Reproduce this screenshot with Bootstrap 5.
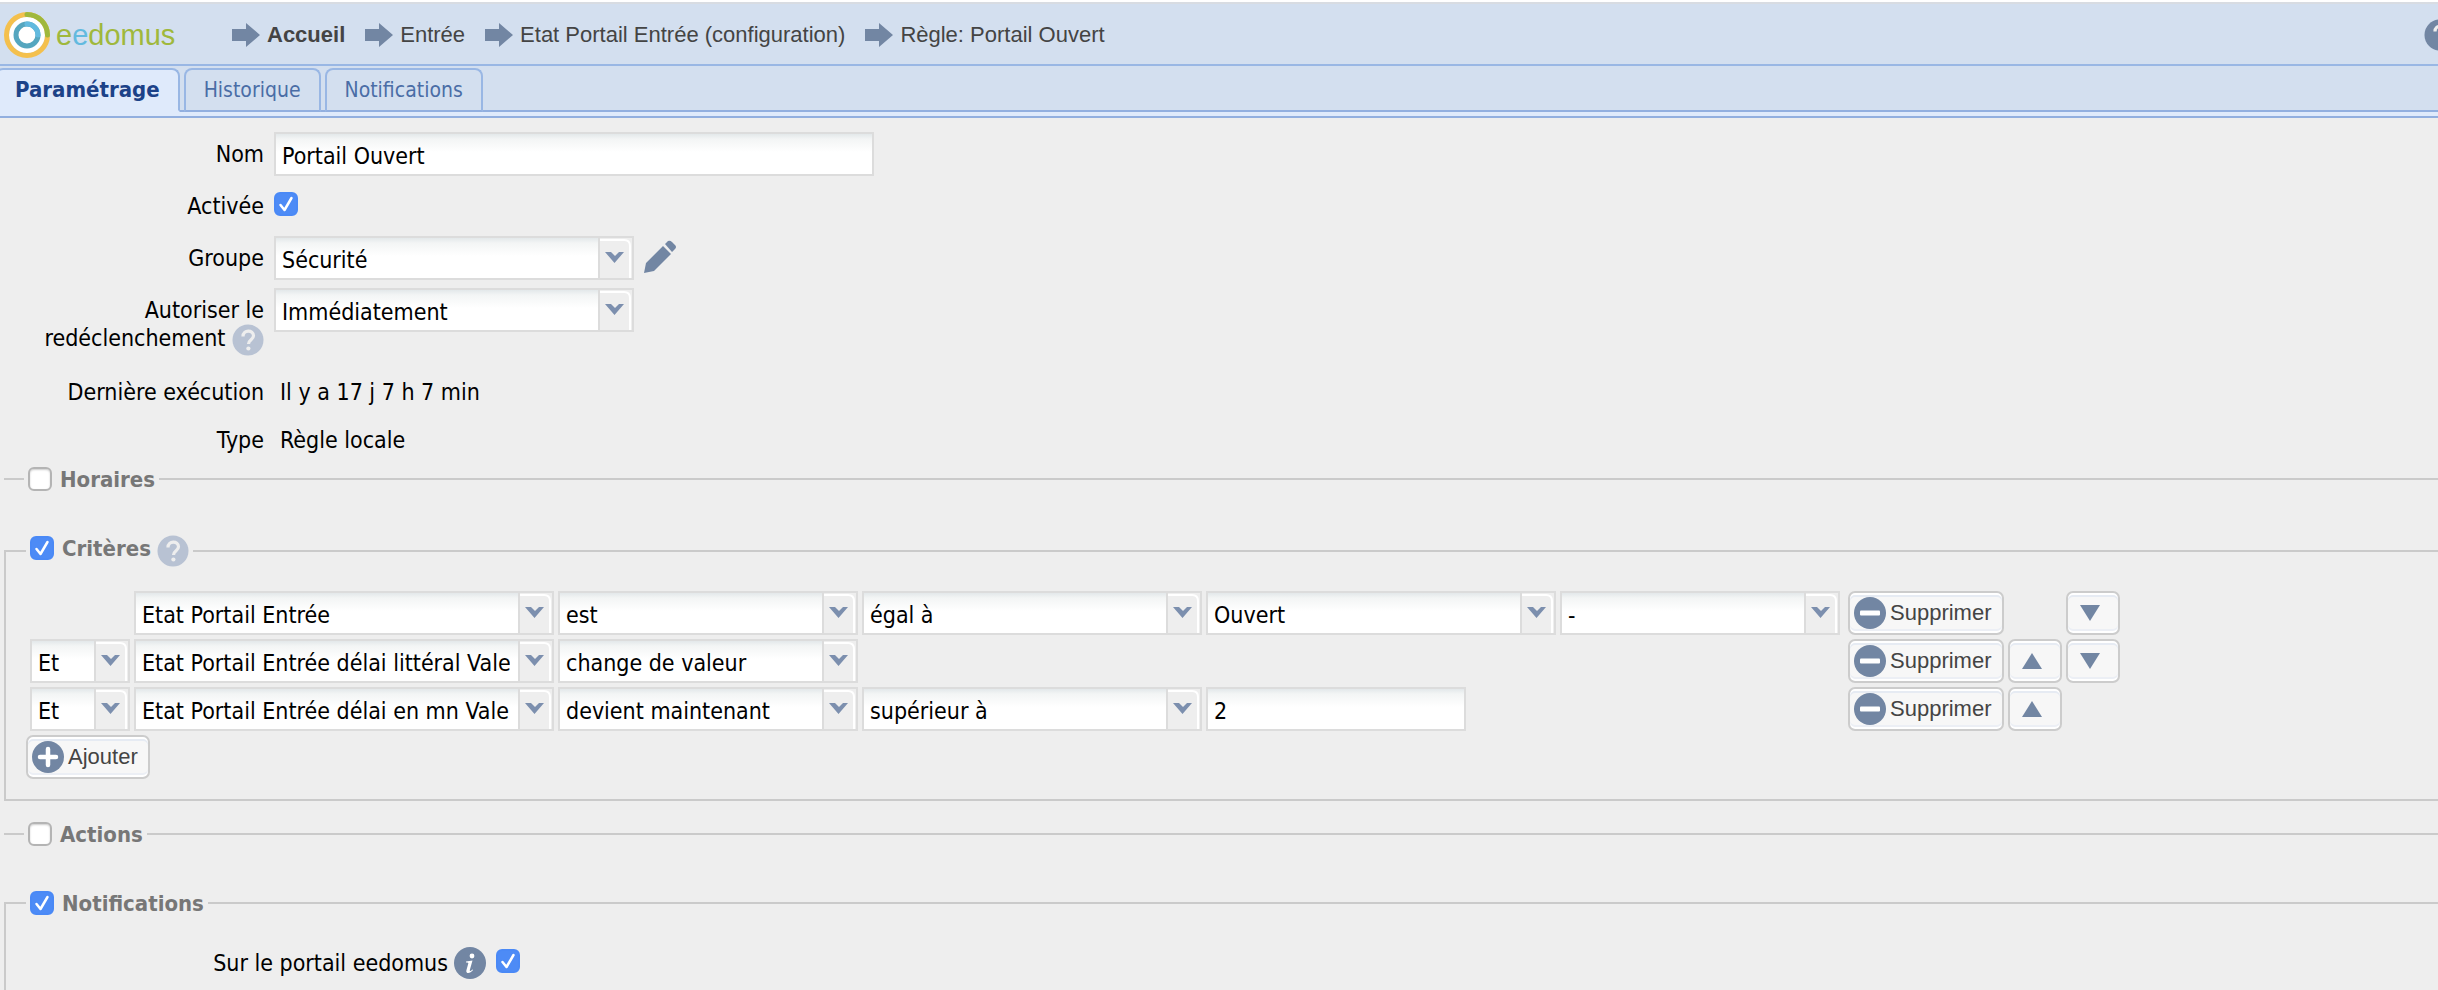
<!DOCTYPE html>
<html lang="fr">
<head>
<meta charset="utf-8">
<meta name="viewport" content="width=device-width, initial-scale=1">
<title>eedomus - Règle: Portail Ouvert</title>
<link href="https://cdn.jsdelivr.net/npm/bootstrap@5.3.0/dist/css/bootstrap.min.css" rel="stylesheet">
<style>
  :root {
    --line: #99b7e4;
    --bar: #d3dfef;
    --strip: #dfeafb;
    --icon: #7286a3;
    --field: #dcdcdc;
    --rule: #cacaca;
  }
  body {
    background: #eee;
    color: #000;
    font: 23px/28px "DejaVu Sans Condensed", "DejaVu Sans", sans-serif;
    overflow-x: hidden;
  }

  /* top bar */
  .topbar {
    height: 66px;
    padding-top: 3px;
    background: var(--bar);
    border-top: 2px solid #fff;
    border-bottom: 2px solid var(--line);
    box-shadow: inset 0 2px #d8dce2;
    overflow: hidden;
    font: 22px/28px "Liberation Sans", Arial, sans-serif;
  }
  .brand { width: 232px; padding-left: 4px; gap: 6px; font-size: 29px; color: #9fb83c; }
  .brand:hover { color: #9fb83c; }
  .brand .blue { color: #62badf; }
  .crumbs { gap: 20px; }
  .crumbs a { color: #444; gap: 7px; }
  .top-help { margin-right: -18px; }

  /* tabs */
  .nav-tabs {
    background: var(--bar);
    border-bottom: 2px solid #92afdf;
    padding-top: 2px;
    gap: 4px;
    flex-wrap: nowrap;
  }
  .nav-tabs .nav-item:first-child { margin-left: -5px; }
  .nav-tabs .nav-link {
    height: 44px;
    margin-bottom: -2px;
    padding: 6px 18px;
    border: 2px solid #99b7e4;
    border-bottom-color: #92afdf;
    border-radius: 8px 8px 0 0;
    font-size: 21px;
    line-height: 28px;
    color: #4a6da6;
  }
  .nav-tabs .nav-link.active {
    background: var(--strip);
    border-color: #99b7e4 #99b7e4 var(--strip);
    font-size: 22px;
    font-weight: bold;
    color: #1c4288;
  }
  .tab-strip { height: 6px; background: var(--strip); border-bottom: 2px solid #92afdf; }

  /* fields */
  .general { padding-top: 14px; }
  .form-line { display: flex; gap: 10px; min-height: 44px; margin-bottom: 8px; }
  .form-line.plain { min-height: 40px; }
  .form-line.two { margin-bottom: 18px; }
  .line-label { width: 264px; padding-top: 8px; text-align: right; flex: none; }
  .line-label svg { margin: -4px 0; }
  .line-value { padding: 8px 0 0 6px; }
  .form-control, .form-select {
    height: 44px;
    padding: 4px 42px 0 6px;
    border: 2px solid var(--field);
    border-radius: 0;
    color: #000;
    font-size: 23px;
    line-height: 28px;
    background-color: #fff;
    background-image: linear-gradient(#e3e8ea, #f3f5f5 5px, #fff 18px);
    background-size: auto;
    background-position: 0 0;
  }
  .form-control { padding-right: 6px; }
  .form-select {
    background-image:
      url("data:image/svg+xml,%3Csvg xmlns='http://www.w3.org/2000/svg' width='34' height='40'%3E%3Cpath fill='%23eee' d='M0 0h34v40H0z'/%3E%3Cpath fill='%23dcdcdc' d='M0 0h2v40H0z'/%3E%3Cpath fill='none' stroke='%23fff' stroke-width='2' d='M2 2h24q6 0 6 6v32'/%3E%3Cpath fill='%237c8fae' d='M7 14h6l4 4 4-4h5l-9.500 11z'/%3E%3C/svg%3E"),
      linear-gradient(#e3e8ea, #f3f5f5 5px, #fff 18px);
    background-position: right 0 top 0, 0 0;
    background-size: 34px 40px, auto;
    background-repeat: no-repeat;
  }
  .w-name { width: 600px; }
  .w-pick { width: 360px; }
  .form-check-input {
    width: 24px;
    height: 24px;
    margin: 0;
    flex: none;
    border: 2px solid #b4b4b4;
    background-color: #fff;
    box-shadow: inset 0 1px 2px #ccc;
  }
  .form-check-input[type=checkbox] { border-radius: 6px; }
  .form-check-input:checked[type=checkbox] {
    border-color: #4a89f6;
    background-color: #4d8bf6;
    box-shadow: none;
    background-size: 24px 24px;
    background-image: url("data:image/svg+xml,%3Csvg xmlns='http://www.w3.org/2000/svg' viewBox='0 0 24 24'%3E%3Cpath fill='none' stroke='%23fff' stroke-width='2.500' stroke-linecap='round' stroke-linejoin='round' d='M6.500 13l4 5 7-12'/%3E%3C/svg%3E");
  }
  .form-line > .form-check-input { margin-top: 8px; }

  /* sections */
  .section { margin-left: 4px; border-top: 2px solid var(--rule); }
  .section.open { border-left: 2px solid var(--rule); }
  .section.closed-box { border-bottom: 2px solid var(--rule); }
  .section > legend {
    float: none;
    width: auto;
    min-height: 26px;
    margin: 0 0 0 20px;
    padding: 0 4px;
    font-size: 22px;
    font-weight: bold;
    line-height: 24px;
    color: #777;
  }
  .section > legend .form-check-input { margin-top: 1px; }
  .section > legend label { padding: 2px 6px 0 8px; }
  .section > legend label:last-child { padding-right: 0; }
  .gap-section { margin-top: 43px; }
  .gap-actions { margin-top: 20px; }
  .criteria-body { padding: 24px 0 20px 20px; }
  .criteria {
    display: grid;
    grid-template-columns: 100px 420px 300px 340px 350px 280px 160px 54px 54px;
    grid-auto-rows: 44px;
    gap: 4px;
    margin: 0 0 4px 4px;
  }
  .at-subject { grid-column: 2; }
  .at-remove { grid-column: 7; justify-self: end; width: 156px; }
  .at-up { grid-column: 8; }
  .at-down { grid-column: 9; }
  .w-number { width: 260px; }
  .tool {
    height: 44px;
    padding: 0 10px 0 4px;
    gap: 4px;
    border: 2px solid #ccc;
    border-radius: 7px;
    background: #f7f7f7;
    box-shadow: inset 0 2px #fff, inset 0 -2px #fff, inset 0 4px #e6ebf3, inset 0 -4px #eceff5;
    font: 22px/28px "Liberation Sans", Arial, sans-serif;
    color: #444;
  }
  .tool:hover { background: #fff; border-color: #bbb; color: #444; }
  .tool.arrow { width: 54px; padding: 0 6px 0 0; }
  .portal { padding-top: 31px; }
  .portal label { width: 480px; gap: 6px; }
  .portal .form-check-input { margin: 2px 0 0 10px; }
</style>
</head>
<body class="d-flex flex-column min-vh-100">

<svg class="d-none" aria-hidden="true">
  <symbol id="i-arrow" viewBox="0 0 28 24"><path fill="#7286a3" d="M0 6h14V0l14 12-14 12v-6H0z"/></symbol>
  <symbol id="i-help" viewBox="0 0 32 32"><circle cx="16" cy="16" r="15.500" fill="currentColor"/><path d="M11 12.500c0-7 10.500-7 10.500-.8 0 4-5 4-5 8.300" fill="none" stroke="#eee" stroke-width="3.200"/><circle cx="16.400" cy="24.500" r="2.100" fill="#eee"/></symbol>
  <symbol id="i-info" viewBox="0 0 32 32"><circle cx="16" cy="16" r="16" fill="#7286a3"/><circle cx="18" cy="9" r="2.400" fill="#fff"/><path d="M12 14.500l6.500-1-2.700 9.500c-.3 1.400.8 1.200 2.500-.6l.8.700c-3.200 4-7.600 3.800-6.700.1l1.900-6.800c.2-.9-.4-1-2.300-1z" fill="#fff"/></symbol>
  <symbol id="i-minus" viewBox="0 0 32 32"><circle cx="16" cy="16" r="16" fill="#7286a3"/><rect x="6" y="13.500" width="20" height="5" rx="1" fill="#fff"/></symbol>
  <symbol id="i-plus" viewBox="0 0 32 32"><circle cx="16" cy="16" r="16" fill="#7286a3"/><path d="M16 8v16M8 16h16" stroke="#fff" stroke-width="4.500" stroke-linecap="round"/></symbol>
  <symbol id="i-up" viewBox="0 0 20 16"><path fill="#7286a3" d="M10 0l10 16H0z"/></symbol>
  <symbol id="i-down" viewBox="0 0 20 16"><path fill="#7286a3" d="M0 0h20L10 16z"/></symbol>
</svg>

<header class="topbar d-flex align-items-center flex-shrink-0">
  <a class="brand d-flex align-items-center text-decoration-none flex-shrink-0" href="#">
    <svg width="46" height="46" viewBox="0 0 46 46" aria-hidden="true">
      <circle cx="23" cy="23" r="18" fill="#fff"/>
      <circle cx="23" cy="23" r="20.500" fill="none" stroke="#f4c04d" stroke-width="5"/>
      <path d="M23 2.500A20.500 20.500 0 0 1 43.500 23" fill="none" stroke="#9fb83c" stroke-width="5" stroke-linecap="round"/>
      <circle cx="23" cy="23" r="11" fill="none" stroke="#55a6bf" stroke-width="5"/>
      <path d="M23 12a11 11 0 0 1 11 11" fill="none" stroke="#62badf" stroke-width="5" stroke-linecap="round"/>
    </svg>
    <span>e<span class="blue">e</span>domus</span>
  </a>
  <nav class="crumbs d-flex text-nowrap flex-grow-1" aria-label="Fil d'Ariane">
    <a class="d-flex align-items-center text-decoration-none fw-bold" href="#"><svg width="28" height="24" aria-hidden="true"><use href="#i-arrow"/></svg>Accueil</a>
    <a class="d-flex align-items-center text-decoration-none" href="#"><svg width="28" height="24" aria-hidden="true"><use href="#i-arrow"/></svg>Entrée</a>
    <a class="d-flex align-items-center text-decoration-none" href="#"><svg width="28" height="24" aria-hidden="true"><use href="#i-arrow"/></svg>Etat Portail Entrée (configuration)</a>
    <a class="d-flex align-items-center text-decoration-none" href="#"><svg width="28" height="24" aria-hidden="true"><use href="#i-arrow"/></svg>Règle: Portail Ouvert</a>
  </nav>
  <svg class="top-help flex-shrink-0" width="32" height="32" color="#7286a3" aria-hidden="true"><use href="#i-help"/></svg>
</header>

<ul class="nav nav-tabs">
  <li class="nav-item"><a class="nav-link active" aria-current="page" href="#">Paramétrage</a></li>
  <li class="nav-item"><a class="nav-link" href="#">Historique</a></li>
  <li class="nav-item"><a class="nav-link" href="#">Notifications</a></li>
</ul>
<div class="tab-strip flex-shrink-0"></div>

<form class="d-flex flex-column flex-grow-1">
  <div class="general">
    <div class="form-line">
      <label class="line-label" for="nom">Nom</label>
      <input class="form-control w-name" id="nom" type="text" value="Portail Ouvert">
    </div>
    <div class="form-line">
      <label class="line-label" for="active">Activée</label>
      <input class="form-check-input" id="active" type="checkbox" checked>
    </div>
    <div class="form-line">
      <label class="line-label" for="groupe">Groupe</label>
      <select class="form-select w-pick" id="groupe"><option>Sécurité</option></select>
      <svg class="mt-1" width="32" height="34" viewBox="0 0 32 34" aria-hidden="true"><path fill="#7286a3" d="M0 33l2-10L19 6l8 8L10 31zM21 4l3-3q2-1 4 1l3 3q2 2 0 4l-3 3z"/></svg>
    </div>
    <div class="form-line two">
      <label class="line-label" for="redecl">Autoriser le redéclenchement <svg width="32" height="32" color="#b8c2d3" aria-hidden="true"><use href="#i-help"/></svg></label>
      <select class="form-select w-pick" id="redecl"><option>Immédiatement</option></select>
    </div>
    <div class="form-line plain">
      <div class="line-label">Dernière exécution</div>
      <div class="line-value">Il y a 17 j 7 h 7 min</div>
    </div>
    <div class="form-line plain">
      <div class="line-label">Type</div>
      <div class="line-value">Règle locale</div>
    </div>
  </div>

  <fieldset class="section">
    <legend class="d-flex align-items-start"><input class="form-check-input" id="horaires" type="checkbox"><label for="horaires">Horaires</label></legend>
  </fieldset>

  <fieldset class="section open closed-box gap-section">
    <legend class="d-flex align-items-start"><input class="form-check-input" id="criteres" type="checkbox" checked><label for="criteres">Critères</label><svg width="32" height="32" color="#b8c2d3" aria-hidden="true"><use href="#i-help"/></svg></legend>
    <div class="criteria-body">
      <div class="criteria">
        <select class="form-select at-subject" aria-label="Périphérique"><option>Etat Portail Entrée</option></select>
        <select class="form-select" aria-label="Verbe"><option>est</option></select>
        <select class="form-select" aria-label="Comparaison"><option>égal à</option></select>
        <select class="form-select" aria-label="Valeur"><option>Ouvert</option></select>
        <select class="form-select" aria-label="Durée"><option>-</option></select>
        <button class="btn tool at-remove d-flex align-items-center" type="button"><svg width="32" height="32" aria-hidden="true"><use href="#i-minus"/></svg>Supprimer</button>
        <button class="btn tool arrow at-down d-flex align-items-center justify-content-center" type="button" aria-label="Descendre"><svg width="20" height="16" aria-hidden="true"><use href="#i-down"/></svg></button>

        <select class="form-select" aria-label="Opérateur"><option>Et</option></select>
        <select class="form-select" aria-label="Périphérique"><option>Etat Portail Entrée délai littéral Valeur</option></select>
        <select class="form-select" aria-label="Verbe"><option>change de valeur</option></select>
        <button class="btn tool at-remove d-flex align-items-center" type="button"><svg width="32" height="32" aria-hidden="true"><use href="#i-minus"/></svg>Supprimer</button>
        <button class="btn tool arrow at-up d-flex align-items-center justify-content-center" type="button" aria-label="Monter"><svg width="20" height="16" aria-hidden="true"><use href="#i-up"/></svg></button>
        <button class="btn tool arrow at-down d-flex align-items-center justify-content-center" type="button" aria-label="Descendre"><svg width="20" height="16" aria-hidden="true"><use href="#i-down"/></svg></button>

        <select class="form-select" aria-label="Opérateur"><option>Et</option></select>
        <select class="form-select" aria-label="Périphérique"><option>Etat Portail Entrée délai en mn Valeur</option></select>
        <select class="form-select" aria-label="Verbe"><option>devient maintenant</option></select>
        <select class="form-select" aria-label="Comparaison"><option>supérieur à</option></select>
        <input class="form-control w-number" type="text" value="2" aria-label="Valeur">
        <button class="btn tool at-remove d-flex align-items-center" type="button"><svg width="32" height="32" aria-hidden="true"><use href="#i-minus"/></svg>Supprimer</button>
        <button class="btn tool arrow at-up d-flex align-items-center justify-content-center" type="button" aria-label="Monter"><svg width="20" height="16" aria-hidden="true"><use href="#i-up"/></svg></button>
      </div>
      <button class="btn tool d-flex align-items-center" type="button"><svg width="32" height="32" aria-hidden="true"><use href="#i-plus"/></svg>Ajouter</button>
    </div>
  </fieldset>

  <fieldset class="section gap-actions">
    <legend class="d-flex align-items-start"><input class="form-check-input" id="actions" type="checkbox"><label for="actions">Actions</label></legend>
  </fieldset>

  <fieldset class="section open gap-section flex-grow-1">
    <legend class="d-flex align-items-start"><input class="form-check-input" id="notifs" type="checkbox" checked><label for="notifs">Notifications</label></legend>
    <div class="portal d-flex">
      <label class="d-flex align-items-center justify-content-end" for="portail">Sur le portail eedomus <svg width="32" height="32" aria-hidden="true"><use href="#i-info"/></svg></label>
      <input class="form-check-input" id="portail" type="checkbox" checked>
    </div>
  </fieldset>
</form>

<script src="https://cdn.jsdelivr.net/npm/bootstrap@5.3.0/dist/js/bootstrap.bundle.min.js"></script>
</body>
</html>
